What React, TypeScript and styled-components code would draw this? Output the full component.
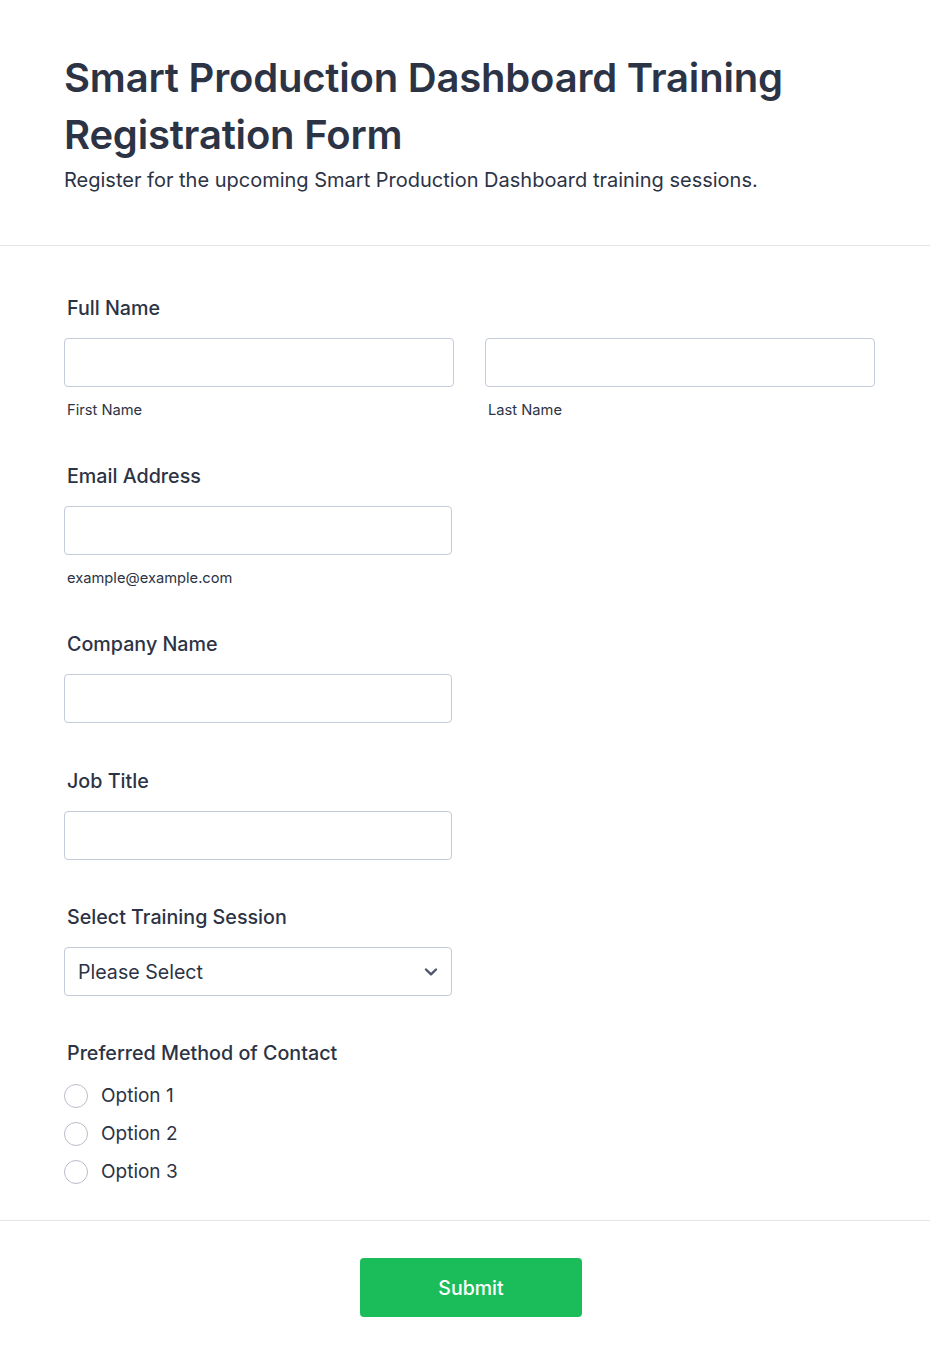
import React from "react";
import styled, { createGlobalStyle } from "styled-components";

const Global = createGlobalStyle`
  html, body { margin: 0; padding: 0; background: #fff; }
  body { font-family: Inter, "Noto Sans", sans-serif; color: #2c3345; }
  * { box-sizing: border-box; }
`;

const Page = styled.div`
  width: 930px;
  min-height: 1367px;
  background: #fff;
  display: flex;
  flex-direction: column;
`;

const Header = styled.header`
  padding: 49px 64px 52px 64px;
  border-bottom: 1px solid #e3e5ea;
`;

const Title = styled.h1`
  margin: 0;
  font-size: 40px;
  font-weight: 600;
  line-height: 57px;
  color: #2c3345;
  letter-spacing: -0.2px;
`;

const Subtitle = styled.p`
  margin: 4px 0 0;
  font-size: 20px;
  line-height: 26px;
  color: #2c3345;
`;

const Body = styled.form`
  padding: 49px 55px 12px 64px;
  display: flex;
  flex-direction: column;
`;

const Field = styled.div<{ $gap?: number }>`
  display: flex;
  flex-direction: column;
  margin-bottom: ${(p) => p.$gap ?? 45}px;
`;

const Label = styled.label`
  font-size: 19.7px;
  font-weight: 500;
  line-height: 26px;
  padding-left: 3px;
  margin-bottom: 17px;
  color: #2c3345;
`;

const Row = styled.div`
  display: grid;
  grid-template-columns: 390px 390px;
  column-gap: 31px;
`;

const Col = styled.div<{ $w: number }>`
  width: ${(p) => p.$w}px;
  display: flex;
  flex-direction: column;
`;

const Input = styled.input`
  width: 100%;
  height: 49px;
  border: 1px solid #c3cad8;
  border-radius: 4px;
  background: #fff;
  font: inherit;
  outline: none;
`;

const Sub = styled.span`
  font-size: 14.7px;
  line-height: 18px;
  margin-top: 14px;
  padding-left: 3px;
  color: #2c3345;
`;

const SelectBox = styled.div`
  width: 388px;
  height: 49px;
  border: 1px solid #c3cad8;
  border-radius: 4px;
  display: flex;
  align-items: center;
  justify-content: space-between;
  padding: 0 13px 0 13px;
  font-size: 19.6px;
  color: #2c3345;
`;

const Radios = styled.div`
  display: flex;
  flex-direction: column;
  gap: 14px;
  margin-top: 1px;
`;

const RadioRow = styled.label`
  display: flex;
  align-items: center;
  gap: 13px;
  font-size: 19px;
  line-height: 24px;
  color: #2c3345;
`;

const Circle = styled.span`
  width: 24px;
  height: 24px;
  border-radius: 50%;
  border: 1px solid #b8bdc9;
  background: #fff;
`;

const Footer = styled.div`
  border-top: 1px solid #e3e5ea;
  padding: 37px 0 50px;
  display: flex;
  justify-content: center;
`;

const Submit = styled.button`
  width: 222px;
  height: 59px;
  margin-left: 12px;
  border: none;
  border-radius: 4px;
  background: #1bbd5b;
  color: #fff;
  font-family: inherit;
  font-size: 19.5px;
  font-weight: 500;
`;

export default function App() {
  return (
    <Page>
      <Global />
      <Header>
        <Title>Smart Production Dashboard Training Registration Form</Title>
        <Subtitle>Register for the upcoming Smart Production Dashboard training sessions.</Subtitle>
      </Header>
      <Body onSubmit={(e) => e.preventDefault()}>
        <Field $gap={44}>
          <Label>Full Name</Label>
          <Row>
            <Col $w={390}>
              <Input />
              <Sub>First Name</Sub>
            </Col>
            <Col $w={390}>
              <Input />
              <Sub>Last Name</Sub>
            </Col>
          </Row>
        </Field>
        <Field $gap={44}>
          <Label>Email Address</Label>
          <Col $w={388}>
            <Input />
            <Sub>example@example.com</Sub>
          </Col>
        </Field>
        <Field $gap={45}>
          <Label>Company Name</Label>
          <Col $w={388}>
            <Input />
          </Col>
        </Field>
        <Field $gap={44}>
          <Label>Job Title</Label>
          <Col $w={388}>
            <Input />
          </Col>
        </Field>
        <Field $gap={44}>
          <Label>Select Training Session</Label>
          <SelectBox>
            <span>Please Select</span>
            <svg width="14" height="10" viewBox="0 0 14 10" fill="none">
              <path d="M2 2.5 L7 7.3 L12 2.5" stroke="#4b566e" strokeWidth="2.4" strokeLinecap="round" strokeLinejoin="round" />
            </svg>
          </SelectBox>
        </Field>
        <Field $gap={24}>
          <Label>Preferred Method of Contact</Label>
          <Radios>
            {["Option 1", "Option 2", "Option 3"].map((o) => (
              <RadioRow key={o}>
                <Circle />
                {o}
              </RadioRow>
            ))}
          </Radios>
        </Field>
      </Body>
      <Footer>
        <Submit type="button">Submit</Submit>
      </Footer>
    </Page>
  );
}
